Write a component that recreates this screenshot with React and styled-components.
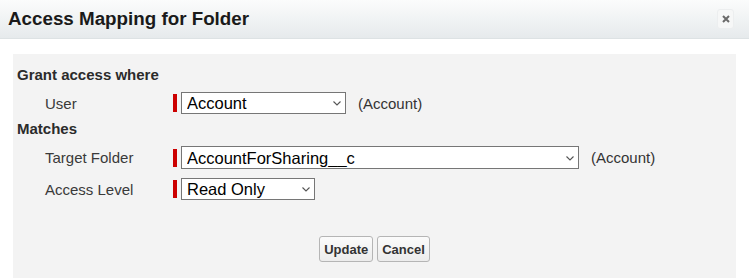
import styled, { createGlobalStyle } from "styled-components"

const Global = createGlobalStyle`
html, body, #root {
  margin: 0;
  height: 100%;
  background: #fff;
}
body {
  font-family: "Liberation Sans", Arial, sans-serif;
}
`

const Dialog = styled.div`
display: flex;
flex-direction: column;
height: 100vh;
`

const Header = styled.div`
height: 38px;
display: flex;
align-items: center;
justify-content: space-between;
padding: 0 15px 0 8px;
background: linear-gradient(#fbfcfc, #e6eaec);
border-bottom: 1px solid #dde2e4;
`

const Title = styled.h2`
margin: 0;
font-size: 18.8px;
font-weight: bold;
color: #1a1a1a;
`

const CloseButton = styled.button`
width: 17px;
height: 20px;
padding: 0;
display: flex;
align-items: center;
justify-content: center;
background: #f6f7f7;
border: 1px solid #eceeef;
border-radius: 3px;
margin-top: -1px;
`

const Body = styled.div`
flex: 1;
display: flex;
padding: 15px 13px 0 13px;
`

const Panel = styled.form`
flex: 1;
background: #f3f3f3;
padding: 12px 4px 0 4px;
display: flex;
flex-direction: column;
`

const SectionTitle = styled.div`
font-size: 15px;
line-height: 18px;
font-weight: bold;
color: #2b2b2b;
margin-top: ${p => p.$top || 0}px;
`

const Row = styled.div`
display: flex;
align-items: center;
height: ${p => p.$h || 22}px;
margin-top: ${p => p.$top || 0}px;
`

const Label = styled.label`
width: 128px;
padding-left: 28px;
font-size: 15px;
color: #3a3a3a;
`

const Required = styled.span`
width: 4px;
height: 18px;
background: #c00;
margin-right: 4px;
`

const SelectWrap = styled.div`
position: relative;
width: ${p => p.$w}px;
height: 100%;
`

const Select = styled.select`
appearance: none;
width: 100%;
height: 100%;
box-sizing: border-box;
border: 1px solid #767676;
border-radius: 0;
background: #fff;
padding: 0 20px 0 5px;
font-family: "Liberation Sans", Arial, sans-serif;
font-size: 16.5px;
color: #000;
`

const Chevron = styled.svg`
position: absolute;
right: 5px;
top: 50%;
margin-top: -2px;
pointer-events: none;
`

const Hint = styled.span`
margin-left: 12px;
font-size: 15px;
color: #333;
`

const Buttons = styled.div`
display: flex;
justify-content: center;
gap: 4px;
margin-top: 36px;
`

const Button = styled.button`
height: 26px;
padding: 0 4px;
font-family: "Liberation Sans", Arial, sans-serif;
font-size: 13px;
font-weight: bold;
color: #333;
background: linear-gradient(#fbfbfb, #ececec);
border: 1px solid #b5b5b5;
border-radius: 3px;
`

const Field = ({ width, options, value }) => (
  <>
    <Required />
    <SelectWrap $w={width}>
      <Select defaultValue={value}>
        {options.map(o => <option key={o}>{o}</option>)}
      </Select>
      <Chevron width="8" height="5" viewBox="0 0 8 5">
        <path d="M0.5 0.5 L4 4 L7.5 0.5" fill="none" stroke="#555" strokeWidth="1.1" />
      </Chevron>
    </SelectWrap>
  </>
)

const App = () => {
  return (
    <Dialog>
      <Global />
      <Header>
        <Title>Access Mapping for Folder</Title>
        <CloseButton aria-label="Close">
          <svg width="8" height="8" viewBox="0 0 8 8">
            <path d="M1 1 L7 7 M7 1 L1 7" stroke="#6a6a6a" strokeWidth="2" />
          </svg>
        </CloseButton>
      </Header>
      <Body>
        <Panel onSubmit={e => e.preventDefault()}>
          <SectionTitle>Grant access where</SectionTitle>
          <Row $top={8}>
            <Label>User</Label>
            <Field width={165} options={["Account"]} value="Account" />
            <Hint>(Account)</Hint>
          </Row>
          <SectionTitle $top={6}>Matches</SectionTitle>
          <Row $top={8} $h={23}>
            <Label>Target Folder</Label>
            <Field width={398} options={["AccountForSharing__c"]} value="AccountForSharing__c" />
            <Hint>(Account)</Hint>
          </Row>
          <Row $top={9}>
            <Label>Access Level</Label>
            <Field width={134} options={["Read Only", "Read/Write"]} value="Read Only" />
          </Row>
          <Buttons>
            <Button type="submit">Update</Button>
            <Button type="button">Cancel</Button>
          </Buttons>
        </Panel>
      </Body>
    </Dialog>
  )
}

export default App
